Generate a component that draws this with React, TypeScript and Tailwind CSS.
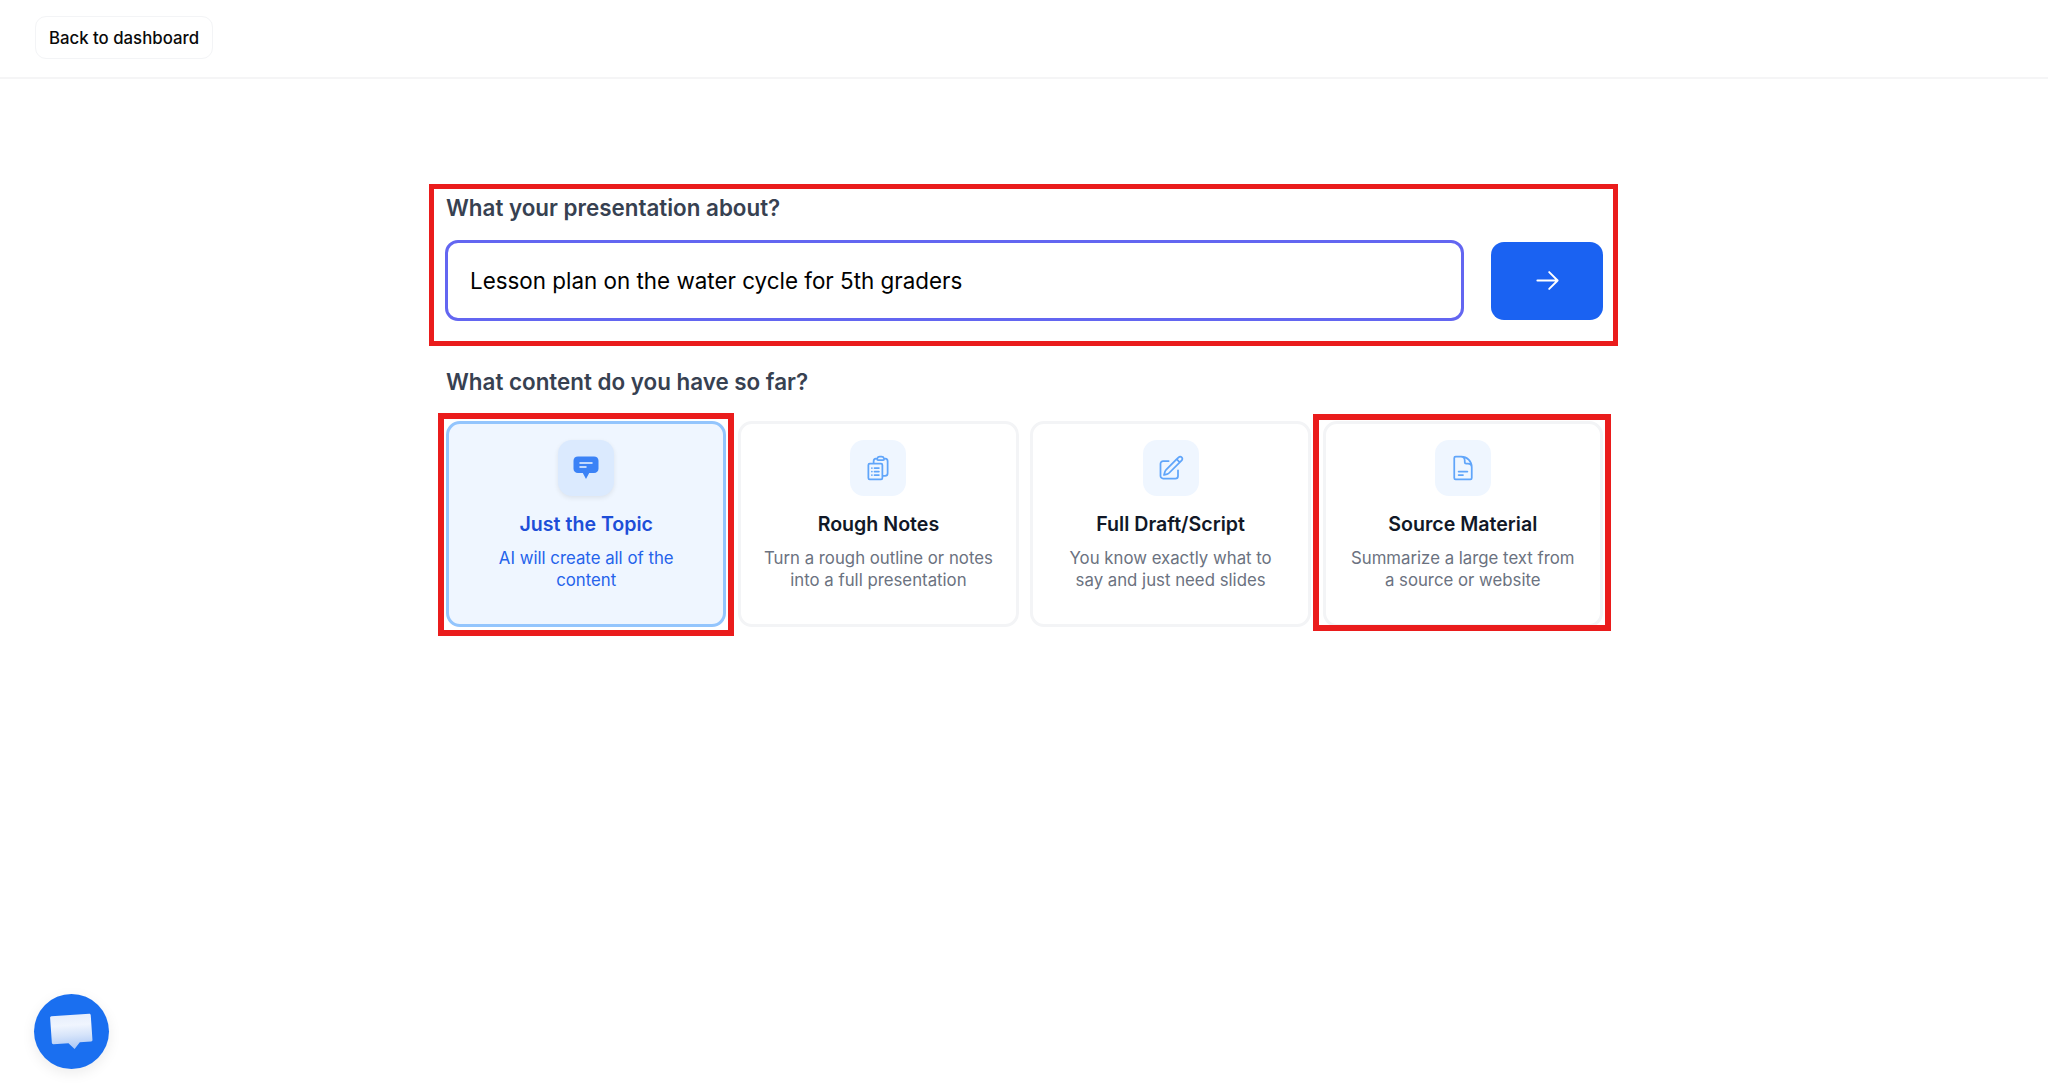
import { HiOutlineClipboardDocumentList, HiOutlineDocumentText, HiOutlinePencilSquare } from "react-icons/hi2";

type Option = {
  title: string;
  lines: string[];
  icon: React.ReactNode;
  active?: boolean;
  marked?: boolean;
};

function TopicIcon() {
  return (
    <svg width="26" height="24" viewBox="0 0 26 24">
      <path
        d="M5 0.5h16c2.6 0 4.5 1.6 4.5 4.2v8c0 2.6-1.900 4.300-4.500 4.300h-4.800L13 23l-3.200-6H5c-2.600 0-4.500-1.700-4.500-4.300v-8C0.500 2.100 2.400 0.500 5 0.500z"
        fill="#3b82f6"
      />
      <path d="M7 7h12M7 11h6" stroke="#eff6ff" strokeWidth="1.500" strokeLinecap="round" />
    </svg>
  );
}

function ChatBubble() {
  return (
    <svg width="43" height="36" viewBox="0 0 44 38" className="-rotate-[4deg]">
      <defs>
        <linearGradient id="bubble" x1="0" y1="0" x2="0" y2="1">
          <stop offset="0" stopColor="#e6eefc" />
          <stop offset="0.3" stopColor="#f0f5fe" />
          <stop offset="0.6" stopColor="#d6e4fa" />
          <stop offset="1" stopColor="#a9c6f5" />
        </linearGradient>
      </defs>
      <path
        d="M2 1h40c.8 0 1.500.7 1.500 1.500V29c0 .8-.7 1.500-1.500 1.500H30l-6 6.500-6-6.500H2c-.8 0-1.500-.7-1.500-1.500V2.500C.5 1.700 1.200 1 2 1z"
        fill="url(#bubble)"
      />
    </svg>
  );
}

const iconClass = "w-[28px] h-[28px] text-[#60a5fa]";

const options: Option[] = [
  {
    title: "Just the Topic",
    lines: ["AI will create all of the", "content"],
    icon: <TopicIcon />,
    active: true,
  },
  {
    title: "Rough Notes",
    lines: ["Turn a rough outline or notes", "into a full presentation"],
    icon: <HiOutlineClipboardDocumentList className={iconClass} />,
  },
  {
    title: "Full Draft/Script",
    lines: ["You know exactly what to", "say and just need slides"],
    icon: <HiOutlinePencilSquare className={iconClass} />,
  },
  {
    title: "Source Material",
    lines: ["Summarize a large text from", "a source or website"],
    icon: <HiOutlineDocumentText className={iconClass} />,
    marked: true,
  },
];

function OptionCard({ option }: { option: Option }) {
  const { active, marked } = option;
  return (
    <div
      className={`relative h-[206px] rounded-[14px] border-[3px] flex flex-col items-center pt-[16px] text-center ${
        active ? "bg-[#eff6ff] border-[#93c5fd]" : "bg-white border-[#f3f4f6]"
      }`}
    >
      <div
        className={`w-[56px] h-[56px] rounded-[14px] flex items-center justify-center ${
          active ? "bg-[#dbeafe] shadow-[0_2px_5px_rgba(0,0,0,0.08)]" : "bg-[#eff6ff]"
        }`}
      >
        {option.icon}
      </div>
      <h3
        className={`mt-[14px] text-[19.600px] leading-[28px] font-semibold ${
          active ? "text-[#1d4ed8]" : "text-[#111827]"
        }`}
      >
        {option.title}
      </h3>
      <p
        className={`mt-[8.500px] text-[16.800px] leading-[22.400px] ${active ? "text-[#2563eb]" : "text-[#6b7280]"}`}
      >
        {option.lines.map((line) => (
          <span key={line} className="block">
            {line}
          </span>
        ))}
      </p>
      {active && (
        <div className="absolute -left-[11px] -right-[11px] -top-[11px] -bottom-[12px] border-[6px] border-[#ea1c1c] pointer-events-none" />
      )}
      {marked && (
        <div className="absolute -left-[13px] -right-[11px] -top-[10px] -bottom-[7px] border-[6px] border-[#ea1c1c] pointer-events-none" />
      )}
    </div>
  );
}

export default function App() {
  return (
    <div className="relative h-[1092px] bg-white font-['Inter',sans-serif] overflow-hidden">
      {/* Top bar */}
      <header className="h-[79px] border-b-2 border-[#f5f5f6] pl-[35px] pt-[16px]">
        <button className="h-[43px] w-[178px] pt-[2px] rounded-[11px] border border-[#f3f4f6] bg-white text-[16.800px] font-medium text-[#0a0a0a]">
          Back to dashboard
        </button>
      </header>

      <main className="mx-auto w-[1164px] pt-[105px]">
        {/* Topic */}
        <section className="relative">
          <h2 className="ml-[4px] text-[22.400px] leading-[48px] font-semibold text-[#374151]">
            What your presentation about?
          </h2>
          <div className="mt-[8px] ml-[3px] flex items-center gap-[27px]">
            <div className="w-[1019px] h-[81px] rounded-[13px] border-[3px] border-[#6366f1] flex items-center pl-[22px] text-[22.400px] text-black">
              Lesson plan on the water cycle for 5th graders
            </div>
            <button className="w-[112px] h-[78px] rounded-[13px] bg-[#1a62f2] flex items-center justify-center">
              <svg
                width="27"
                height="27"
                viewBox="0 0 24 24"
                fill="none"
                stroke="white"
                strokeWidth="1.700"
                strokeLinecap="round"
                strokeLinejoin="round"
              >
                <path d="M13.500 4.500 21 12m0 0-7.500 7.500M21 12H3" />
              </svg>
            </button>
          </div>
          <div className="absolute -left-[13px] right-[-12px] top-0 h-[162px] border-[5px] border-[#ea1c1c] pointer-events-none" />
        </section>

        {/* Content type */}
        <section className="mt-[44.500px]">
          <h2 className="ml-[4px] text-[22.400px] leading-[32px] font-semibold text-[#374151]">
            What content do you have so far?
          </h2>
          <div className="mt-[23.500px] ml-[4px] w-[1157px] grid grid-cols-4 gap-[11.700px]">
            {options.map((option) => (
              <OptionCard key={option.title} option={option} />
            ))}
          </div>
        </section>
      </main>

      {/* Chat launcher */}
      <button className="absolute left-[34px] bottom-[23px] w-[75px] h-[75px] rounded-full bg-[#1a6ff0] shadow-[0_4px_14px_rgba(0,0,0,0.08)] flex items-center justify-center">
        <ChatBubble />
      </button>
    </div>
  );
}
